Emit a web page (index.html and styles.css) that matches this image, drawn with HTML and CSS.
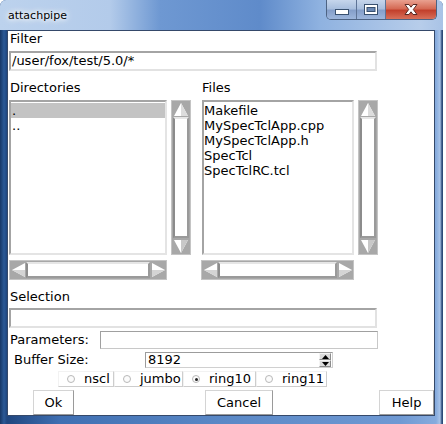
FILE: index.html
```html
<!DOCTYPE html>
<html>
<head>
<meta charset="utf-8">
<link rel="stylesheet" href="styles.css">
</head>
<body>
<div class="window">
  <div class="titlebar">
    <span class="title">attachpipe</span>
    <div class="caption-buttons">
      <div class="cbtn cmin"><svg width="14" height="6" viewBox="0 0 14 6"><rect x="0.5" y="0.5" width="13" height="5" fill="#fff" stroke="#38506f"/></svg></div>
      <div class="cbtn cmax"><svg width="14" height="11" viewBox="0 0 14 11"><rect x="0.5" y="0.5" width="13" height="10" fill="#fff" stroke="#38506f"/><rect x="3" y="3.5" width="8" height="4" fill="#6a88b4" stroke="#38506f"/></svg></div>
      <div class="cbtn cclose"><svg width="16" height="13" viewBox="0 0 16 13"><path d="M2 1.5 L6 1.5 L8 4.2 L10 1.5 L14 1.5 L10.3 6.5 L14 11.5 L10 11.5 L8 8.8 L6 11.5 L2 11.5 L5.7 6.5 Z" fill="#fff" stroke="#5a2a24" stroke-width="1"/></svg></div>
    </div>
  </div>
  <div class="client">
    <div class="label filter-label">Filter</div>
    <div class="entry filter-entry">/user/fox/test/5.0/*</div>
    <div class="list-headers"><span class="hdr-dirs">Directories</span><span class="hdr-files">Files</span></div>
    <div class="lists">
      <div class="listbox dir-list">
        <div class="item selected">.</div>
        <div class="item">..</div>
      </div>
      <div class="vscroll dir-vscroll">
        <div class="varrow"><svg width="16" height="15" viewBox="0 0 16 15"><polygon points="8,1 15,14 1,14" fill="#fff"/><polygon points="8,1 15,14 8,14" fill="#dcdcdc"/></svg></div>
        <div class="vthumb"></div>
        <div class="varrow"><svg width="16" height="15" viewBox="0 0 16 15"><polygon points="1,1 15,1 8,14" fill="#fff"/><polygon points="8,1 15,1 8,14" fill="#c8c8c8"/></svg></div>
      </div>
      <div class="listbox file-list">
        <div class="item">Makefile</div>
        <div class="item">MySpecTclApp.cpp</div>
        <div class="item">MySpecTclApp.h</div>
        <div class="item">SpecTcl</div>
        <div class="item">SpecTclRC.tcl</div>
      </div>
      <div class="vscroll file-vscroll">
        <div class="varrow"><svg width="16" height="15" viewBox="0 0 16 15"><polygon points="8,1 15,14 1,14" fill="#fff"/><polygon points="8,1 15,14 8,14" fill="#dcdcdc"/></svg></div>
        <div class="vthumb"></div>
        <div class="varrow"><svg width="16" height="15" viewBox="0 0 16 15"><polygon points="1,1 15,1 8,14" fill="#fff"/><polygon points="8,1 15,1 8,14" fill="#c8c8c8"/></svg></div>
      </div>
    </div>
    <div class="hscrolls">
      <div class="hscroll dir-hscroll">
        <div class="harrow"><svg width="15" height="16" viewBox="0 0 15 16"><polygon points="1,8 14,1 14,15" fill="#fff"/><polygon points="1,8 14,8 14,15" fill="#d4d4d4"/></svg></div>
        <div class="hthumb"></div>
        <div class="harrow"><svg width="15" height="16" viewBox="0 0 15 16"><polygon points="1,1 14,8 1,15" fill="#fff"/><polygon points="1,8 14,8 1,15" fill="#d4d4d4"/></svg></div>
      </div>
      <div class="hscroll file-hscroll">
        <div class="harrow"><svg width="15" height="16" viewBox="0 0 15 16"><polygon points="1,8 14,1 14,15" fill="#fff"/><polygon points="1,8 14,8 14,15" fill="#d4d4d4"/></svg></div>
        <div class="hthumb"></div>
        <div class="harrow"><svg width="15" height="16" viewBox="0 0 15 16"><polygon points="1,1 14,8 1,15" fill="#fff"/><polygon points="1,8 14,8 1,15" fill="#d4d4d4"/></svg></div>
      </div>
    </div>
    <div class="label sel-label">Selection</div>
    <div class="entry sel-entry"></div>
    <div class="params-row">
      <span class="params-label">Parameters:</span>
      <div class="params-entry"></div>
    </div>
    <div class="buffer-row">
      <span class="buffer-label">Buffer Size:</span>
      <div class="spinbox">
        <span class="spin-value">8192</span>
        <div class="spin-arrows">
          <div class="spin-btn"><svg width="9" height="5" viewBox="0 0 9 5"><polygon points="4.5,0 9,5 0,5" fill="#000"/></svg></div>
          <div class="spin-btn"><svg width="9" height="5" viewBox="0 0 9 5"><polygon points="0,0 9,0 4.5,5" fill="#000"/></svg></div>
        </div>
      </div>
    </div>
    <div class="radio-row">
      <div class="radio r-nscl"><span class="dot"></span>nscl</div>
      <div class="radio r-jumbo"><span class="dot"></span>jumbo</div>
      <div class="radio r-ring10"><span class="dot on"></span>ring10</div>
      <div class="radio r-ring11"><span class="dot"></span>ring11</div>
    </div>
    <div class="button-row">
      <div class="btn b-ok">Ok</div>
      <div class="btn b-cancel">Cancel</div>
      <div class="btn b-help">Help</div>
    </div>
  </div>
</div>
</body>
</html>
```
FILE: styles.css
```css
html, body {
  margin: 0;
  padding: 0;
  background: #ffffff;
}
body {
  width: 446px;
  height: 424px;
  overflow: hidden;
  font-family: "DejaVu Sans", sans-serif;
  font-size: 13px;
  color: #000;
}
.window {
  width: 443px;
  height: 424px;
  display: flex;
  flex-direction: column;
  background: linear-gradient(90deg, #173766 0px, #2b5996 4px, #1f467f 7px, #3f6fb2 60px, #5a88c6 220px, #6f99d3 400px, #86abdd 436px, #a9c4e8 440px, #2c4a78 442px);
  border-radius: 6px 6px 0 0;
}
.titlebar {
  height: 30px;
  display: flex;
  align-items: flex-start;
  background: linear-gradient(90deg, #bcd2ed 0px, #b3cbea 110px, #6e98d2 160px, #5f8bca 260px, #8fb2e0 320px, #b7cdea 420px, #a9c3e6 443px);
  border-radius: 6px 6px 0 0;
  flex: none;
}
.title {
  font-family: "DejaVu Sans", sans-serif;
  font-size: 11px;
  line-height: 14px;
  margin-top: 9px;
  padding-left: 8px;
  color: #000;
  text-shadow: 0 0 4px #fff, 0 0 6px #fff, 0 0 8px #e8f0fa;
}
.caption-buttons {
  margin-left: auto;
  margin-right: 6px;
  display: flex;
  height: 19px;
  border: 1px solid #4d6383;
  border-top: none;
  border-radius: 0 0 5px 5px;
  overflow: hidden;
}
.cbtn {
  height: 19px;
  display: flex;
  align-items: center;
  justify-content: center;
}
.cmin {
  width: 29px;
  background: linear-gradient(180deg, #c6d6ec 0%, #a9bfde 45%, #859fca 55%, #9db6dc 100%);
  border-right: 1px solid #5d7396;
}
.cmin svg { margin-top: 5px; }
.cmax {
  width: 28px;
  background: linear-gradient(180deg, #c6d6ec 0%, #a9bfde 45%, #859fca 55%, #9db6dc 100%);
  border-right: 1px solid #5d7396;
}
.cclose {
  width: 50px;
  background: linear-gradient(180deg, #e9a190 0%, #d56a55 45%, #c2402c 55%, #d8705a 100%);
}
.client {
  margin-left: 7px;
  width: 426px;
  height: 384px;
  border: 1px solid #35496a;
  background: #ffffff;
  display: flex;
  flex-direction: column;
  flex: none;
}
.label {
  height: 15px;
  line-height: 15px;
  padding-left: 2px;
}
.entry {
  box-sizing: border-box;
  height: 20px;
  width: 368px;
  margin-left: 1px;
  border: 2px solid;
  border-color: #a4a4a4 #e2e2e2 #e2e2e2 #a4a4a4;
  padding-left: 1px;
  line-height: 16px;
  white-space: nowrap;
}
.filter-entry { margin-top: 5px; }
.list-headers {
  margin-top: 9px;
  height: 15px;
  line-height: 15px;
  display: flex;
}
.hdr-dirs { margin-left: 2px; width: 192px; }
.lists {
  margin-top: 5px;
  height: 155px;
  display: flex;
}
.listbox {
  box-sizing: border-box;
  height: 155px;
  border: 2px solid;
  border-color: #a4a4a4 #e4e4e4 #e4e4e4 #a4a4a4;
  padding-top: 1px;
  overflow: hidden;
}
.dir-list { margin-left: 1px; width: 158px; }
.file-list { margin-left: 11px; width: 152px; }
.item {
  height: 15px;
  line-height: 15px;
  white-space: nowrap;
  padding-left: 1px;
}
.file-list .item { padding-left: 0; }
.item.selected { background: #c3c3c3; }
.vscroll {
  box-sizing: border-box;
  width: 20px;
  height: 155px;
  margin-left: 4px;
  background: #a8a8a8;
  border: 1px solid #c4c4c4;
  display: flex;
  flex-direction: column;
  align-items: center;
}
.varrow {
  height: 16px;
  width: 18px;
  display: flex;
  align-items: center;
  justify-content: center;
  flex: none;
}
.vthumb {
  flex: 1;
  box-sizing: border-box;
  width: 16px;
  background: #fff;
  border: 2px solid;
  border-color: #e6e6e6 #9a9a9a #9a9a9a #8c8c8c;
}
.hscrolls {
  margin-top: 5px;
  height: 20px;
  display: flex;
}
.hscroll {
  box-sizing: border-box;
  height: 20px;
  background: #a8a8a8;
  border: 1px solid #c4c4c4;
  display: flex;
  align-items: center;
}
.dir-hscroll { margin-left: 1px; width: 158px; }
.file-hscroll { margin-left: 34px; width: 153px; }
.harrow {
  width: 16px;
  height: 18px;
  display: flex;
  align-items: center;
  justify-content: center;
  flex: none;
}
.hthumb {
  flex: 1;
  box-sizing: border-box;
  height: 16px;
  background: #fff;
  border: 2px solid;
  border-color: #e6e6e6 #9a9a9a #9a9a9a #8c8c8c;
}
.sel-label { margin-top: 9px; }
.sel-entry { margin-top: 4px; }
.params-row {
  margin-top: 3px;
  height: 18px;
  display: flex;
  align-items: center;
}
.params-label {
  margin-left: 2px;
  width: 90px;
  line-height: 18px;
}
.params-entry {
  box-sizing: border-box;
  width: 278px;
  height: 18px;
  border: 1px solid #a0a0a0;
  border-right-color: #c8c8c8;
  border-bottom-color: #c8c8c8;
}
.buffer-row {
  margin-top: 3px;
  height: 16px;
  display: flex;
  align-items: center;
}
.buffer-label {
  margin-left: 6px;
  width: 131px;
  line-height: 16px;
}
.spinbox {
  box-sizing: border-box;
  width: 188px;
  height: 16px;
  border: 1px solid #9c9c9c;
  border-right-color: #d0d0d0;
  border-bottom-color: #d0d0d0;
  display: flex;
  align-items: center;
}
.spin-value {
  padding-left: 2px;
  line-height: 14px;
  flex: 1;
}
.spin-arrows {
  width: 12px;
  height: 14px;
  display: flex;
  flex-direction: column;
  margin-right: 1px;
}
.spin-btn {
  box-sizing: border-box;
  height: 7px;
  display: flex;
  align-items: center;
  justify-content: center;
  border: 1px solid;
  border-color: #f4f4f4 #8c8c8c #8c8c8c #f4f4f4;
  background: #dcdcdc;
}
.spin-btn svg { width: 7px; height: 4px; }
.radio-row {
  margin-top: 3px;
  height: 16px;
  display: flex;
  padding-left: 50px;
}
.radio {
  box-sizing: border-box;
  height: 16px;
  border: 1px solid;
  border-color: #f2f2f2 #cdcdcd #cdcdcd #f2f2f2;
  display: flex;
  align-items: center;
  padding-left: 8px;
  line-height: 14px;
  white-space: nowrap;
}
.r-nscl { width: 56px; }
.r-jumbo { width: 69px; }
.r-ring10 { width: 73px; }
.r-ring11 { width: 71px; }
.dot {
  box-sizing: border-box;
  width: 8px;
  height: 8px;
  border-radius: 50%;
  border: 1px solid #b8b8b8;
  background: #fbfbfb;
  margin-right: 9px;
  flex: none;
  display: flex;
  align-items: center;
  justify-content: center;
}
.dot.on::after {
  content: "";
  width: 3px;
  height: 3px;
  border-radius: 50%;
  background: #222;
}
.button-row {
  margin-top: 3px;
  height: 25px;
  display: flex;
}
.btn {
  box-sizing: border-box;
  height: 25px;
  border: 1px solid;
  border-color: #d4d4d4 #9a9a9a #9a9a9a #d4d4d4;
  background: #fff;
  display: flex;
  align-items: center;
  justify-content: center;
}
.b-ok { margin-left: 25px; width: 41px; }
.b-cancel { margin-left: 131px; width: 69px; }
.b-help { margin-left: 106px; width: 55px; }
```
